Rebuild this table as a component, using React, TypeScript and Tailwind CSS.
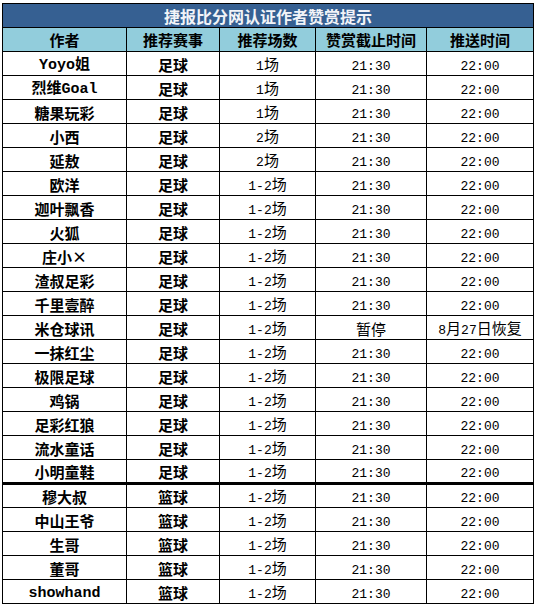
import React from 'react';

type Row = [string, string, string, string, string];

const rows: Row[] = [
  ['Yoyo姐', '足球', '1场', '21:30', '22:00'],
  ['烈维Goal', '足球', '1场', '21:30', '22:00'],
  ['糖果玩彩', '足球', '1场', '21:30', '22:00'],
  ['小西', '足球', '2场', '21:30', '22:00'],
  ['延敖', '足球', '2场', '21:30', '22:00'],
  ['欧洋', '足球', '1-2场', '21:30', '22:00'],
  ['迦叶飘香', '足球', '1-2场', '21:30', '22:00'],
  ['火狐', '足球', '1-2场', '21:30', '22:00'],
  ['庄小×', '足球', '1-2场', '21:30', '22:00'],
  ['渣叔足彩', '足球', '1-2场', '21:30', '22:00'],
  ['千里壹醉', '足球', '1-2场', '21:30', '22:00'],
  ['米仓球讯', '足球', '1-2场', '暂停', '8月27日恢复'],
  ['一抹红尘', '足球', '1-2场', '21:30', '22:00'],
  ['极限足球', '足球', '1-2场', '21:30', '22:00'],
  ['鸡锅', '足球', '1-2场', '21:30', '22:00'],
  ['足彩红狼', '足球', '1-2场', '21:30', '22:00'],
  ['流水童话', '足球', '1-2场', '21:30', '22:00'],
  ['小明童鞋', '足球', '1-2场', '21:30', '22:00'],
  ['穆大叔', '篮球', '1-2场', '21:30', '22:00'],
  ['中山王爷', '篮球', '1-2场', '21:30', '22:00'],
  ['生哥', '篮球', '1-2场', '21:30', '22:00'],
  ['董哥', '篮球', '1-2场', '21:30', '22:00'],
  ['showhand', '篮球', '1-2场', '21:30', '22:00'],
];

const widths = ['w-[124px]', 'w-[93px]', 'w-[96px]', 'w-[111px]', 'w-[107px]'];
const heads = ['作者', '推荐赛事', '推荐场数', '赞赏截止时间', '推送时间'];

// split into ascii / cjk runs so digits get the narrow mono face
function Mixed({ text, bold }: { text: string; bold?: boolean }) {
  const parts = text.match(/[\x20-\x7e]+|[^\x20-\x7e]+/g) ?? [];
  return (
    <span className="leading-none">
      {parts.map((p, i) =>
        /^[\x20-\x7e]+$/.test(p) ? (
          <span
            key={i}
            className={bold ? "font-['Liberation_Mono'] text-[15px] font-bold" : "font-['Liberation_Mono'] text-[13px]"}
          >
            {p}
          </span>
        ) : (
          <span key={i} className={bold ? 'text-[15px] font-bold' : 'text-[15px]'}>
            {p}
          </span>
        )
      )}
    </span>
  );
}

export default function App() {
  return (
    <div className="bg-white w-[534px] h-[607px] pt-[3px] pl-[2px] font-['Noto_Sans_CJK_SC',sans-serif] text-black leading-none">
      <div className="w-[532px] border-l border-t border-black">
        <div className="h-[24px] bg-[#366092] border-b border-r border-black flex items-center justify-center text-[16px] font-bold text-[#f2f4f8]">
          捷报比分网认证作者赞赏提示
        </div>
        <div className="h-[24px] flex bg-[#92cddc] border-b border-black">
          {heads.map((h, i) => (
            <div key={h} className={`${widths[i]} border-r border-black flex items-center justify-center text-[15px] font-bold`}>
              {h}
            </div>
          ))}
        </div>
        {rows.map((r, ri) => (
          <div
            key={ri}
            className={
              ri === 17
                ? 'h-[25px] flex border-b-[3px] border-black'
                : ri === 18
                ? 'h-[23px] flex border-b border-black'
                : 'h-[24px] flex border-b border-black'
            }
          >
            {r.map((c, ci) => (
              <div key={ci} className={`${widths[ci]} border-r border-black flex items-center justify-center whitespace-nowrap`}>
                <Mixed text={c} bold={ci < 2} />
              </div>
            ))}
          </div>
        ))}
      </div>
    </div>
  );
}
